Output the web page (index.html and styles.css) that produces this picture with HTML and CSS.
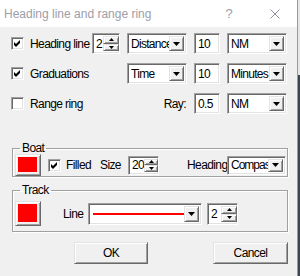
FILE: index.html
```html
<!DOCTYPE html>
<html lang="en">
  <head>
    <meta charset="UTF-8" />
    <meta name="viewport" content="width=device-width, initial-scale=1.0" />
    <title>Heading line and range ring</title>
    <link rel="stylesheet" href="styles.css">
  </head>
  <body>
    <div class="window">
      <!-- titleBar 标题栏 -->
      <div class="titleBar">
        <span class="titleText">Heading line and range ring</span>
        <span class="helpBtn">?</span>
        <span class="closeBtn">
          <svg width="10" height="10" viewBox="0 0 10 10"><path d="M0.5 0.5L9.5 9.5M9.5 0.5L0.5 9.5" stroke="#8f8f99" stroke-width="1"/></svg>
        </span>
      </div>

      <!-- optionGrid 上面三行 -->
      <div class="optionGrid">
        <div class="checkRow">
          <span class="checkBox"><svg width="7" height="7" viewBox="0 0 7 7"><path d="M0 2L2 4L6 0V3L2 7L0 5Z"/></svg></span>
          <span>Heading line</span>
        </div>
        <div class="spin">
          <span class="spinText">2</span>
          <span class="spinBtns">
            <span class="spinBtn"><svg width="5" height="3" viewBox="0 0 5 3"><path d="M2.5 0L5 3H0Z"/></svg></span>
            <span class="spinBtn"><svg width="5" height="3" viewBox="0 0 5 3"><path d="M0 0H5L2.5 3Z"/></svg></span>
          </span>
        </div>
        <div class="combo">
          <span class="comboText">Distance</span>
          <span class="comboBtn"><svg width="7" height="4" viewBox="0 0 7 4"><path d="M0 0H7L3.5 4Z"/></svg></span>
        </div>
        <div class="edit">10</div>
        <div class="combo">
          <span class="comboText">NM</span>
          <span class="comboBtn"><svg width="7" height="4" viewBox="0 0 7 4"><path d="M0 0H7L3.5 4Z"/></svg></span>
        </div>

        <div class="checkRow wide">
          <span class="checkBox"><svg width="7" height="7" viewBox="0 0 7 7"><path d="M0 2L2 4L6 0V3L2 7L0 5Z"/></svg></span>
          <span>Graduations</span>
        </div>
        <div class="combo">
          <span class="comboText">Time</span>
          <span class="comboBtn"><svg width="7" height="4" viewBox="0 0 7 4"><path d="M0 0H7L3.5 4Z"/></svg></span>
        </div>
        <div class="edit">10</div>
        <div class="combo">
          <span class="comboText">Minutes</span>
          <span class="comboBtn"><svg width="7" height="4" viewBox="0 0 7 4"><path d="M0 0H7L3.5 4Z"/></svg></span>
        </div>

        <div class="checkRow">
          <span class="checkBox"></span>
          <span>Range ring</span>
        </div>
        <div class="rayLabel">Ray:</div>
        <div class="edit">0.5</div>
        <div class="combo">
          <span class="comboText">NM</span>
          <span class="comboBtn"><svg width="7" height="4" viewBox="0 0 7 4"><path d="M0 0H7L3.5 4Z"/></svg></span>
        </div>
      </div>

      <!-- Boat 分组 -->
      <fieldset class="group boatGroup">
        <legend>Boat</legend>
        <div class="groupRow">
          <div class="colorBtn"><span class="swatch"></span></div>
          <span class="checkBox filledBox"><svg width="7" height="7" viewBox="0 0 7 7"><path d="M0 2L2 4L6 0V3L2 7L0 5Z"/></svg></span>
          <span class="filledLabel">Filled</span>
          <span class="sizeLabel">Size</span>
          <div class="spin sizeSpin">
            <span class="spinText">20</span>
            <span class="spinBtns">
              <span class="spinBtn"><svg width="5" height="3" viewBox="0 0 5 3"><path d="M2.5 0L5 3H0Z"/></svg></span>
              <span class="spinBtn"><svg width="5" height="3" viewBox="0 0 5 3"><path d="M0 0H5L2.5 3Z"/></svg></span>
            </span>
          </div>
          <span class="headingLabel">Heading</span>
          <div class="combo headingCombo">
            <span class="comboText">Compass</span>
            <span class="comboBtn"><svg width="7" height="4" viewBox="0 0 7 4"><path d="M0 0H7L3.5 4Z"/></svg></span>
          </div>
        </div>
      </fieldset>

      <!-- Track 分组 -->
      <fieldset class="group trackGroup">
        <legend>Track</legend>
        <div class="groupRow">
          <div class="colorBtn trackColor"><span class="swatch"></span></div>
          <span class="lineLabel">Line</span>
          <div class="combo lineCombo">
            <span class="comboText"><span class="redLine"></span></span>
            <span class="comboBtn"><svg width="7" height="4" viewBox="0 0 7 4"><path d="M0 0H7L3.5 4Z"/></svg></span>
          </div>
          <div class="spin lineSpin">
            <span class="spinText">2</span>
            <span class="spinBtns">
              <span class="spinBtn"><svg width="5" height="3" viewBox="0 0 5 3"><path d="M2.5 0L5 3H0Z"/></svg></span>
              <span class="spinBtn"><svg width="5" height="3" viewBox="0 0 5 3"><path d="M0 0H5L2.5 3Z"/></svg></span>
            </span>
          </div>
        </div>
      </fieldset>

      <!-- 按钮 -->
      <div class="buttonRow">
        <div class="pushBtn okBtn">OK</div>
        <div class="pushBtn cancelBtn">Cancel</div>
      </div>
    </div>
  </body>
</html>
```

FILE: styles.css
```css
* {
  margin: 0;
  padding: 0;
  box-sizing: border-box;
}
body {
  width: 300px;
  height: 276px;
  overflow: hidden;
  background: linear-gradient(to bottom, #e6e6e6 75px, #3b4652 75px);
}
.window {
  width: 298px;
  height: 276px;
  background: #f0f0f0;
  border-right: 1px solid #9a9a9a;
  font-family: "Liberation Sans", Arial, sans-serif;
  font-size: 12px;
  letter-spacing: -0.6px;
  color: #000;
}
.titleBar {
  display: flex;
  align-items: center;
  height: 27px;
  background: #fff;
  padding-left: 4px;
  letter-spacing: 0;
}
.titleText {
  font-size: 12px;
  color: #9d9da8;
  flex: 1;
}
.helpBtn {
  width: 46px;
  text-align: center;
  font-size: 13px;
  color: #9d9da8;
}
.closeBtn {
  width: 46px;
  display: flex;
  justify-content: center;
  margin-right: -1px;
}

/* 凹陷边框 */
.edit,
.combo,
.spin,
.checkBox {
  background: #fff;
  border: 1px solid;
  border-color: #a0a0a0 #fff #fff #a0a0a0;
  box-shadow: inset 1px 1px #696969, inset -1px -1px #e3e3e3;
}
/* 凸起边框 */
.comboBtn,
.spinBtn,
.colorBtn,
.pushBtn {
  background: #f0f0f0;
  border: 1px solid;
  border-color: #e3e3e3 #696969 #696969 #e3e3e3;
  box-shadow: inset 1px 1px #fff, inset -1px -1px #a0a0a0;
}

.optionGrid {
  display: grid;
  grid-template-columns: 74px 28px 60px 26px 60px;
  grid-template-rows: 21px 21px 21px;
  column-gap: 7px;
  row-gap: 9px;
  padding: 6px 0 0 11px;
}
.checkRow {
  display: flex;
  align-items: center;
  white-space: nowrap;
}
.checkRow.wide {
  grid-column: 1 / 3;
}
.checkBox {
  width: 13px;
  height: 13px;
  flex-shrink: 0;
  display: flex;
  align-items: center;
  justify-content: center;
  margin-right: 6px;
}
.rayLabel {
  grid-column: 2 / 4;
  display: flex;
  align-items: center;
  justify-content: flex-end;
  padding-right: 1px;
}
.edit {
  display: flex;
  align-items: center;
  padding-left: 3px;
}
.combo {
  display: flex;
  padding: 2px;
}
.comboText {
  flex: 1;
  display: flex;
  align-items: center;
  padding-left: 1px;
  overflow: hidden;
  white-space: nowrap;
  letter-spacing: -0.7px;
}
.comboBtn {
  width: 15px;
  flex-shrink: 0;
  display: flex;
  align-items: center;
  justify-content: center;
}
.spin {
  display: flex;
  padding: 2px 0 2px 2px;
}
.spinText {
  flex: 1;
  display: flex;
  align-items: center;
  padding-left: 1px;
}
.spinBtns {
  width: 16px;
  display: flex;
  flex-direction: column;
}
.spinBtn {
  flex: 1;
  display: flex;
  align-items: center;
  justify-content: center;
}

/* 分组框 */
.group {
  margin: 0 9px 0 12px;
  border: 1px solid #a0a0a0;
  box-shadow: 1px 1px #fff, inset 1px 1px #fff;
  padding: 0 1px 0 2px;
  min-width: 0;
}
.group legend {
  margin-left: 5px;
  padding: 0 2px;
  line-height: 12px;
}
.boatGroup {
  margin-top: 28px;
}
.trackGroup {
  margin-top: 7px;
  padding-top: 5px;
  padding-bottom: 5px;
}
.groupRow {
  display: flex;
  align-items: center;
  height: 22px;
  white-space: nowrap;
}
.trackGroup .groupRow {
  height: 25px;
}
.colorBtn {
  width: 26px;
  height: 22px;
  padding: 2px 3px 3px 2px;
}
.trackColor {
  height: 25px;
}
.swatch {
  display: block;
  width: 100%;
  height: 100%;
  background: #ff0000;
}
.filledBox {
  margin-left: 7px;
  margin-right: 5px;
}
.filledLabel {
  width: 34px;
}
.sizeLabel {
  width: 28px;
}
.sizeSpin {
  width: 31px;
  height: 19px;
}
.headingLabel {
  margin-left: 28px;
  width: 40px;
}
.headingCombo {
  width: 59px;
  height: 19px;
}
.headingCombo .comboText {
  letter-spacing: -1px;
}
.lineLabel {
  margin-left: 22px;
  width: 25px;
}
.lineCombo {
  width: 114px;
  height: 22px;
}
.redLine {
  display: block;
  width: 93px;
  height: 2px;
  margin-left: 1px;
  background: #ff0000;
}
.lineSpin {
  width: 31px;
  height: 22px;
  margin-left: 5px;
}

/* 按钮 */
.buttonRow {
  display: flex;
  gap: 65px;
  padding-left: 74px;
  margin-top: 10px;
}
.pushBtn {
  height: 22px;
  display: flex;
  align-items: center;
  justify-content: center;
}
.okBtn {
  width: 74px;
}
.cancelBtn {
  width: 75px;
}
```
